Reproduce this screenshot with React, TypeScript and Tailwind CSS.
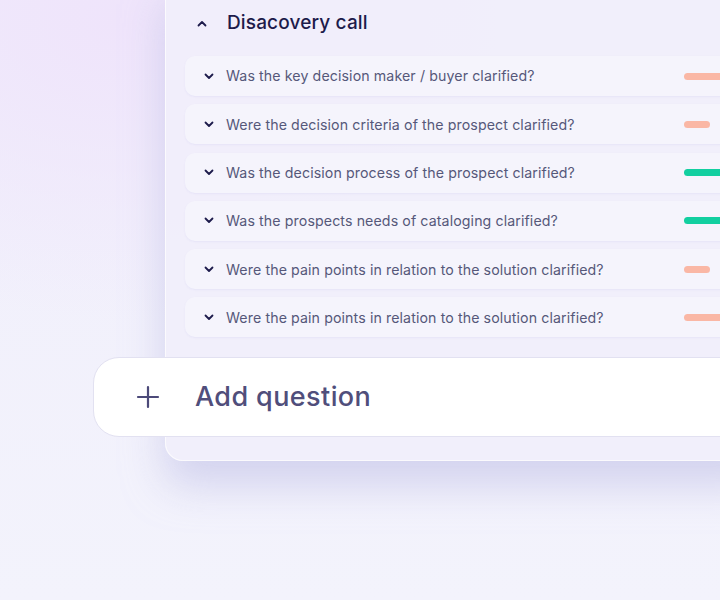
import React from 'react';

type Question = {
  id: number;
  text: string;
  tone: 'pink' | 'green';
  long: boolean;
};

const questions: Question[] = [
  { id: 1, text: 'Was the key decision maker / buyer clarified?', tone: 'pink', long: true },
  { id: 2, text: 'Were the decision criteria of the prospect clarified?', tone: 'pink', long: false },
  { id: 3, text: 'Was the decision process of the prospect clarified?', tone: 'green', long: true },
  { id: 4, text: 'Was the prospects needs of cataloging clarified?', tone: 'green', long: true },
  { id: 5, text: 'Were the pain points in relation to the solution clarified?', tone: 'pink', long: false },
  { id: 6, text: 'Were the pain points in relation to the solution clarified?', tone: 'pink', long: true },
];

function ChevronDown() {
  return (
    <svg width="10" height="7" viewBox="0 0 10 7" fill="none" className="shrink-0">
      <path d="M1.5 1.5L5 5L8.5 1.5" stroke="#1d1b4b" strokeWidth="1.8" strokeLinecap="round" strokeLinejoin="round" />
    </svg>
  );
}

function ChevronUp() {
  return (
    <svg width="10" height="7" viewBox="0 0 10 7" fill="none" className="shrink-0">
      <path d="M1.5 5.5L5 2L8.5 5.5" stroke="#1d1b4b" strokeWidth="1.8" strokeLinecap="round" strokeLinejoin="round" />
    </svg>
  );
}

function QuestionRow({ q }: { q: Question }) {
  return (
    <div className="h-[40px] flex items-center rounded-[10px] bg-[#f5f4fc] shadow-[0_1px_2px_rgba(120,110,200,0.08)] pl-[19px]">
      <ChevronDown />
      <span className="ml-[12px] text-[14.2px] text-[#56587a] tracking-[0.1px] whitespace-nowrap">{q.text}</span>
      <div className="flex-1" />
      {/* score bar, starts at a fixed column */}
      <div className="w-[80px] shrink-0 flex">
        <div
          className={`h-[7px] rounded-full ${q.tone === 'green' ? 'bg-[#12cfa0]' : 'bg-[#fab7a5]'} ${
            q.long ? 'w-[70px]' : 'w-[26px]'
          }`}
        />
      </div>
    </div>
  );
}

export default function App() {
  return (
    <div
      className="w-[720px] h-[600px] overflow-hidden bg-[#f3f3fc] font-['Inter',sans-serif]"
      style={{
        backgroundImage:
          'radial-gradient(ellipse 420px 300px at 120px 20px, #efe4fb 0%, rgba(239,228,251,0) 100%), linear-gradient(180deg, #f0eefb 0%, #f3f3fc 100%)',
      }}
    >
      <div className="ml-[165px] mt-[-20px] w-[600px] rounded-b-[18px] border border-white/70 bg-[#f1eefb]/90 shadow-[0_24px_40px_rgba(190,190,230,0.6)]">
        <div className="h-[75px] flex items-center pl-[31px] pt-[10px]">
          <ChevronUp />
          <h2 className="ml-[20px] text-[19px] font-medium text-[#1d1b4b] tracking-[0.15px]">Disacovery call</h2>
        </div>
        <div className="pl-[19px] flex flex-col gap-[8.3px]">
          {questions.map(q => (
            <QuestionRow key={q.id} q={q} />
          ))}
        </div>
        <div className="mt-[20px] ml-[-73px] h-[80px] flex items-center rounded-l-[26px] bg-white border border-[#e2e1f1] pl-[42px]">
          <svg width="24" height="24" viewBox="0 0 24 24" fill="none" className="shrink-0">
            <path d="M12 2V22M2 12H22" stroke="#4c4a79" strokeWidth="2.2" strokeLinecap="round" />
          </svg>
          <span className="ml-[35px] text-[27px] font-medium text-[#504e7b] tracking-[0.4px]">Add question</span>
        </div>
        <div className="h-[23px]" />
      </div>
    </div>
  );
}
